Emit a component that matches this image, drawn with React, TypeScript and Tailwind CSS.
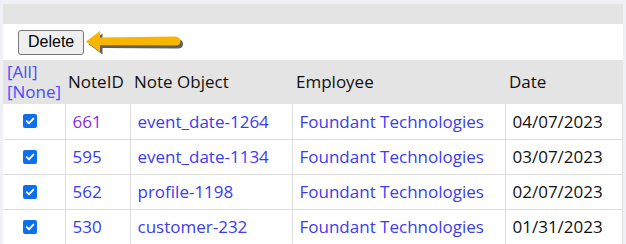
import React from 'react';

const rows = [
  { id: '661', obj: 'event_date-1264', emp: 'Foundant Technologies', date: '04/07/2023', visited: true },
  { id: '595', obj: 'event_date-1134', emp: 'Foundant Technologies', date: '03/07/2023' },
  { id: '562', obj: 'profile-1198', emp: 'Foundant Technologies', date: '02/07/2023' },
  { id: '530', obj: 'customer-232', emp: 'Foundant Technologies', date: '01/31/2023' },
];

function Arrow() {
  return (
    <svg width="100" height="26" viewBox="0 0 100 26" className="ml-[1px] mt-[1px]">
      <path d="M2 12 L16 1.5 L16 8 L91 7 Q96.5 7.5 96.5 12 Q96.5 16.5 91 16.5 L16 16 L16 22.5 Z" fill="#2a2a2a" opacity="0.75" transform="translate(1.5,2)" />
      <path d="M1 11.5 L15 1 L15 7.5 L90 6.5 Q95.5 7 95.5 11.3 Q95.5 15.6 90 15.6 L15 15.2 L15 22 Z" fill="#f7b500" />
    </svg>
  );
}

function Check() {
  return (
    <span className="flex w-[14px] h-[14px] rounded-[2px] bg-[#0b6ff0] items-center justify-center">
      <svg width="10" height="10" viewBox="0 0 10 10">
        <path d="M1.8 5.2 L4 7.4 L8.4 2.6" stroke="white" strokeWidth="1.9" fill="none" strokeLinecap="round" strokeLinejoin="round" />
      </svg>
    </span>
  );
}

export default function App() {
  return (
    <div className="w-[626px] h-[244px] bg-[#f0f1f6] pt-[4px] pl-[3px] pr-[3px] overflow-hidden" style={{ fontFamily: '"Open Sans", sans-serif' }}>
      <div className="h-[20px] bg-[#e4e4e4] w-[620px]" />
      <div className="h-[36px] bg-white w-[620px] flex items-center pl-[15px]">
        <button
          className="h-[25px] px-[9px] border border-[#767676] rounded-[3px] bg-[#efefef] text-[16px] text-black leading-none"
          style={{ fontFamily: '"Liberation Sans", Arial, sans-serif' }}
        >
          Delete
        </button>
        <Arrow />
      </div>
      <table className="border-collapse w-[620px] bg-white text-[17px]">
        <thead>
          <tr className="bg-[#e4e4e4] h-[44px] text-[#111]">
            <th className="w-[62px] text-left font-normal pl-[4px] leading-[20px] text-[#4b4bff]">
              <div>[All]</div>
              <div>[None]</div>
            </th>
            <th className="w-[65px] text-left font-normal pl-[3px]">NoteID</th>
            <th className="w-[162px] text-left font-normal pl-[4px]">Note Object</th>
            <th className="w-[213px] text-left font-normal pl-[4px]">Employee</th>
            <th className="text-left font-normal pl-[4px]">Date</th>
          </tr>
        </thead>
        <tbody>
          {rows.map((r) => (
            <tr key={r.id} className="h-[35px] border-b border-[#dedede]">
              <td className="border-r border-[#dedede] pl-[20px]">
                <div className="flex items-center">
                  <Check />
                </div>
              </td>
              <td className={`pl-[7px] border-r border-[#dedede] ${r.visited ? 'text-[#8a2be2]' : 'text-[#3c3cf0]'}`}>{r.id}</td>
              <td className="pl-[7px] border-r border-[#dedede] text-[#3c3cf0]">{r.obj}</td>
              <td className="pl-[7px] border-r border-[#dedede] text-[#3c3cf0]">{r.emp}</td>
              <td className="pl-[7px] border-r border-[#dedede] text-[#111]">{r.date}</td>
            </tr>
          ))}
        </tbody>
      </table>
    </div>
  );
}
